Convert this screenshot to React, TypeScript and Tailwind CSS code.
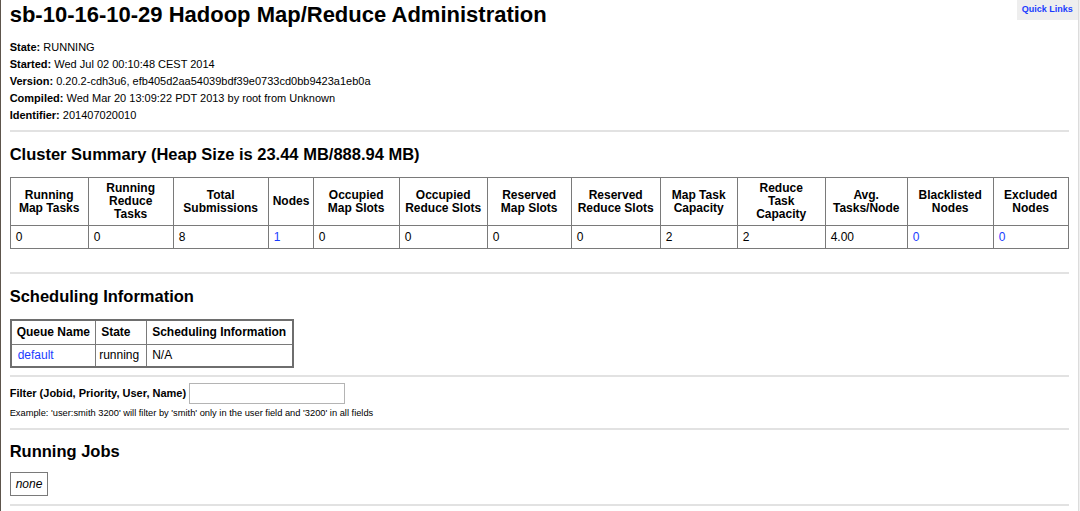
import React from 'react';

const clusterCols = [
  { label: ['Running', 'Map Tasks'], value: '0', w: 'w-[78px]' },
  { label: ['Running', 'Reduce', 'Tasks'], value: '0', w: 'w-[85px]' },
  { label: ['Total', 'Submissions'], value: '8', w: 'w-[95px]' },
  { label: ['Nodes'], value: '1', w: 'w-[45px]', link: true },
  { label: ['Occupied', 'Map Slots'], value: '0', w: 'w-[86px]' },
  { label: ['Occupied', 'Reduce Slots'], value: '0', w: 'w-[88px]' },
  { label: ['Reserved', 'Map Slots'], value: '0', w: 'w-[84px]' },
  { label: ['Reserved', 'Reduce Slots'], value: '0', w: 'w-[89px]' },
  { label: ['Map Task', 'Capacity'], value: '2', w: 'w-[77px]' },
  { label: ['Reduce', 'Task', 'Capacity'], value: '2', w: 'w-[88px]' },
  { label: ['Avg.', 'Tasks/Node'], value: '4.00', w: 'w-[82px]' },
  { label: ['Blacklisted', 'Nodes'], value: '0', w: 'w-[86px]', link: true },
  { label: ['Excluded', 'Nodes'], value: '0', w: 'w-[75px]', link: true },
];

const info = [
  ['State:', 'RUNNING'],
  ['Started:', 'Wed Jul 02 00:10:48 CEST 2014'],
  ['Version:', '0.20.2-cdh3u6, efb405d2aa54039bdf39e0733cd0bb9423a1eb0a'],
  ['Compiled:', 'Wed Mar 20 13:09:22 PDT 2013 by root from Unknown'],
  ['Identifier:', '201407020010'],
];

const Rule = ({ className = '' }: { className?: string }) => (
  <div className={`h-[2px] bg-[#e2e2e2] ${className}`} />
);

export default function App() {
  return (
    <div className="flex h-[511px] w-[1080px] overflow-hidden bg-white text-black font-['Liberation_Sans',Arial,sans-serif]">
      <div className="w-[1px] bg-[#5d554c]" />
      <div className="relative flex-1 pl-[9px] pr-[9px]">
        {/* Quick links */}
        <div className="absolute right-0 top-0 flex h-[20px] w-[61px] items-center justify-center bg-[#eeeeee]">
          <a className="text-[9px] font-bold text-[#1a3cff]">Quick Links</a>
        </div>

        <h1 className="text-[22px] font-bold leading-[30px]">
          sb-10-16-10-29 Hadoop Map/Reduce Administration
        </h1>

        <div className="mt-[9px] text-[11px] leading-[17px]">
          {info.map(([k, v]) => (
            <div key={k}>
              <b>{k}</b> {v}
            </div>
          ))}
        </div>

        <Rule className="mt-[6px]" />

        <h2 className="mt-[11px] text-[16.5px] font-bold leading-[22px]">
          Cluster Summary (Heap Size is 23.44 MB/888.94 MB)
        </h2>

        <table className="mt-[12px] w-[1059px] table-fixed border-collapse border border-[#7a7a7a]">
          <thead>
            <tr className="h-[48px]">
              {clusterCols.map((c, i) => (
                <th
                  key={i}
                  className={`${c.w} border border-[#7a7a7a] px-[4px] text-center align-middle text-[12px] font-bold leading-[13px]`}
                >
                  {c.label.map((l, j) => (
                    <div key={j}>{l}</div>
                  ))}
                </th>
              ))}
            </tr>
          </thead>
          <tbody>
            <tr className="h-[23px]">
              {clusterCols.map((c, i) => (
                <td
                  key={i}
                  className={`border border-[#7a7a7a] px-[5px] text-left align-middle text-[12px] leading-[14px] ${
                    c.link ? 'text-[#1a3cff]' : ''
                  }`}
                >
                  {c.value}
                </td>
              ))}
            </tr>
          </tbody>
        </table>

        <Rule className="mt-[23px]" />

        <h2 className="mt-[11px] text-[16.5px] font-bold leading-[22px]">Scheduling Information</h2>

        <table className="mt-[12px] border-collapse border-2 border-[#6e6e6e] text-[12px] leading-[14px] whitespace-nowrap">
          <thead>
            <tr className="h-[24px]">
              <th className="w-[85px] border border-[#7a7a7a] px-[5px] text-left font-bold">Queue Name</th>
              <th className="w-[51px] border border-[#7a7a7a] px-[5px] text-left font-bold">State</th>
              <th className="w-[146px] border border-[#7a7a7a] px-[5px] text-left font-bold">
                Scheduling Information
              </th>
            </tr>
          </thead>
          <tbody>
            <tr className="h-[23px]">
              <td className="border border-[#7a7a7a] px-[6px] text-[#1a3cff]">default</td>
              <td className="border border-[#7a7a7a] px-[3px]">running</td>
              <td className="border border-[#7a7a7a] px-[5px]">N/A</td>
            </tr>
          </tbody>
        </table>

        <Rule className="mt-[7px]" />

        <div className="mt-[6px] flex h-[21px] items-center gap-[3px]">
          <span className="text-[11px] font-bold">Filter (Jobid, Priority, User, Name)</span>
          <input className="h-[21px] w-[156px] border border-[#b4b4b4] bg-white outline-none" />
        </div>
        <div className="mt-[3px] text-[9.3px] leading-[12px]">
          Example: 'user:smith 3200' will filter by 'smith' only in the user field and '3200' in all fields
        </div>

        <Rule className="mt-[9px]" />

        <h2 className="mt-[10px] text-[16.5px] font-bold leading-[22px]">Running Jobs</h2>

        <div className="mt-[10px] flex h-[24px] w-[38px] items-center border border-[#7a7a7a] px-[5px] text-[12px] italic">
          none
        </div>

        <Rule className="mt-[8px]" />
      </div>
      <div className="w-[3px] border-l border-[#dcdcdc] bg-[#f0f0f0]" />
    </div>
  );
}
